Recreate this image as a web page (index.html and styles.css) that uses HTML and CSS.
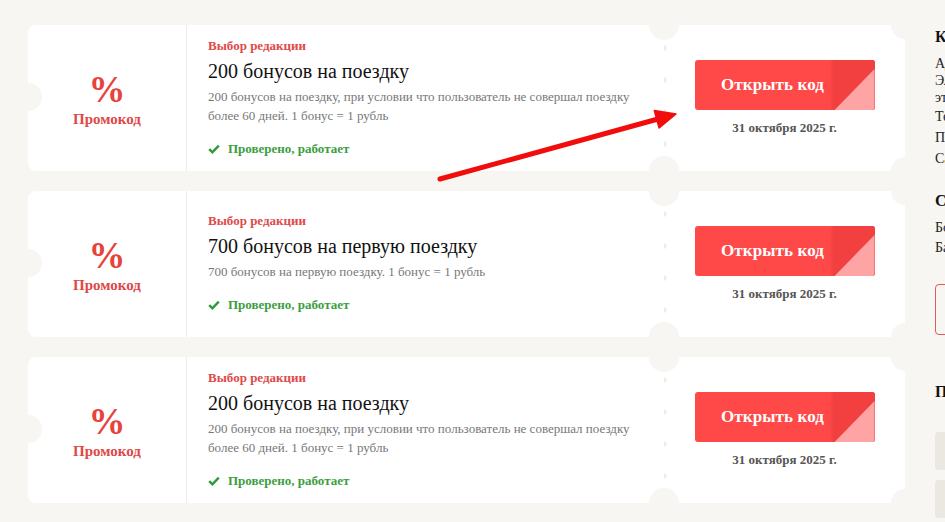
FILE: index.html
```html
<!DOCTYPE html>
<html lang="ru">
<head>
<meta charset="utf-8">
<title>Промокоды</title>
<link rel="stylesheet" href="styles.css">
</head>
<body>
<div class="page">
  <main class="coupons">
    <article class="coupon">
      <div class="coupon-type">
        <span class="percent">%</span>
        <span class="type-name">Промокод</span>
      </div>
      <div class="coupon-info">
        <div class="label">Выбор редакции</div>
        <h2 class="title">200 бонусов на поездку</h2>
        <p class="desc">200 бонусов на поездку, при условии что пользователь не совершал поездку более 60 дней. 1 бонус = 1 рубль</p>
        <div class="verified"><svg class="check" viewBox="0 0 12 10" width="12" height="10"><path d="M1.2 5.2 L4.4 8.3 L10.8 1.6" fill="none" stroke="#2f9a3c" stroke-width="2.4"/></svg>Проверено, работает</div>
      </div>
      <div class="coupon-action">
        <button class="open-btn"><span class="btn-text">Открыть код</span><span class="fold"></span></button>
        <div class="date">31 октября 2025 г.</div>
      </div>
    </article>
    <article class="coupon">
      <div class="coupon-type">
        <span class="percent">%</span>
        <span class="type-name">Промокод</span>
      </div>
      <div class="coupon-info">
        <div class="label">Выбор редакции</div>
        <h2 class="title">700 бонусов на первую поездку</h2>
        <p class="desc">700 бонусов на первую поездку. 1 бонус = 1 рубль</p>
        <div class="verified"><svg class="check" viewBox="0 0 12 10" width="12" height="10"><path d="M1.2 5.2 L4.4 8.3 L10.8 1.6" fill="none" stroke="#2f9a3c" stroke-width="2.4"/></svg>Проверено, работает</div>
      </div>
      <div class="coupon-action">
        <button class="open-btn"><span class="btn-text">Открыть код</span><span class="fold"></span></button>
        <div class="date">31 октября 2025 г.</div>
      </div>
    </article>
    <article class="coupon">
      <div class="coupon-type">
        <span class="percent">%</span>
        <span class="type-name">Промокод</span>
      </div>
      <div class="coupon-info">
        <div class="label">Выбор редакции</div>
        <h2 class="title">200 бонусов на поездку</h2>
        <p class="desc">200 бонусов на поездку, при условии что пользователь не совершал поездку более 60 дней. 1 бонус = 1 рубль</p>
        <div class="verified"><svg class="check" viewBox="0 0 12 10" width="12" height="10"><path d="M1.2 5.2 L4.4 8.3 L10.8 1.6" fill="none" stroke="#2f9a3c" stroke-width="2.4"/></svg>Проверено, работает</div>
      </div>
      <div class="coupon-action">
        <button class="open-btn"><span class="btn-text">Открыть код</span><span class="fold"></span></button>
        <div class="date">31 октября 2025 г.</div>
      </div>
    </article>
    <svg class="arrow" viewBox="0 0 877 200" width="877" height="200">
      <line x1="412" y1="154" x2="630" y2="94" stroke="#f20d0d" stroke-width="5" stroke-linecap="round"/>
      <polygon points="648,89 631.1,103 626.3,85.6" fill="#f20d0d" stroke="#f20d0d" stroke-width="1.5" stroke-linejoin="round"/>
    </svg>
  </main>
  <aside class="sidebar">
    <h3 class="side-title">Контакты</h3>
    <div class="side-block">
      <div class="side-line tight">Адрес: Москва,</div>
      <div class="side-line tight">Электрозаводская ул., 27,</div>
      <div class="side-line tight">этаж 3</div>
      <div class="side-line">Телефон: 8 800 000-00-00</div>
      <div class="side-line">Почта: info@example.ru</div>
      <div class="side-line">Сайт: example.ru</div>
    </div>
    <h3 class="side-title second">Способы оплаты</h3>
    <div class="side-block pay">
      <div class="side-line">Бонусы</div>
      <div class="side-line">Банковская карта</div>
    </div>
    <div class="side-button">Перейти в магазин</div>
    <h3 class="side-title third">Похожие магазины</h3>
    <div class="side-card"></div>
    <div class="side-card"></div>
  </aside>
</div>
</body>
</html>
```
FILE: styles.css
```css
html, body {
  margin: 0;
  padding: 0;
}
body {
  background: #f7f6f2;
  font-family: "Liberation Serif", "Times New Roman", serif;
  color: #111;
  overflow: hidden;
  width: 945px;
  height: 522px;
}
.page {
  display: flex;
  gap: 30px;
  padding: 25px 0 0 28px;
}
.coupons {
  position: relative;
  flex: 0 0 877px;
  display: flex;
  flex-direction: column;
  gap: 20px;
}
.coupon {
  position: relative;
  height: 146px;
  display: grid;
  grid-template-columns: 159px 477px 241px;
  background: #fff;
  border-radius: 8px 0 0 8px;
}
.coupon::before,
.coupon::after {
  content: "";
  position: absolute;
  right: -14px;
  width: 28px;
  height: 28px;
  border-radius: 50%;
  background: #f7f6f2;
}
.coupon::before { top: -14px; }
.coupon::after { bottom: -14px; }

.coupon-type {
  position: relative;
  border-right: 1px solid #ececec;
  display: flex;
  flex-direction: column;
  align-items: center;
  justify-content: center;
  color: #e8423c;
  padding-top: 4px;
}
.coupon-type::before {
  content: "";
  position: absolute;
  left: -14px;
  top: 58px;
  width: 28px;
  height: 28px;
  border-radius: 50%;
  background: #f7f6f2;
}
.percent {
  font-size: 37px;
  font-weight: bold;
  line-height: 36px;
}
.type-name {
  font-size: 15px;
  font-weight: bold;
  line-height: 18px;
  margin-top: 2px;
  color: #e04848;
}

.coupon-info {
  display: flex;
  flex-direction: column;
  justify-content: center;
  padding: 0 20px 2px 21px;
}
.label {
  font-size: 13px;
  font-weight: bold;
  color: #e04a4a;
  line-height: 16px;
}
.title {
  margin: 4px 0 0;
  font-size: 20px;
  font-weight: normal;
  line-height: 26px;
  color: #111;
}
.desc {
  margin: 3px 0 0;
  font-size: 13px;
  line-height: 19px;
  color: #777;
}
.verified {
  margin-top: 16px;
  display: flex;
  align-items: center;
  gap: 8px;
  font-size: 13px;
  font-weight: bold;
  line-height: 16px;
  color: #3b9e3f;
}
.check {
  flex: none;
}

.coupon-action {
  position: relative;
  display: flex;
  flex-direction: column;
  align-items: center;
  justify-content: center;
  background-image: radial-gradient(circle, #eeede9 2.4px, transparent 3px);
  background-size: 6px 32px;
  background-repeat: repeat-y;
  background-position: -3px 7px;
}
.coupon-action::before,
.coupon-action::after {
  content: "";
  position: absolute;
  left: -15px;
  width: 30px;
  height: 30px;
  border-radius: 50%;
  background: #f7f6f2;
}
.coupon-action::before { top: -15px; }
.coupon-action::after { bottom: -15px; }

.open-btn {
  position: relative;
  overflow: hidden;
  width: 180px;
  height: 50px;
  border: none;
  border-radius: 3px;
  background: #ff4848;
  padding: 0 24px 0 0;
  margin-top: 0;
  font-family: inherit;
  color: #fff;
  cursor: pointer;
}
.btn-text {
  position: relative;
  z-index: 1;
  font-size: 17px;
  font-weight: bold;
  line-height: 50px;
  letter-spacing: 0.1px;
}
.fold {
  position: absolute;
  right: 0;
  top: 0;
  width: 42px;
  height: 50px;
  background: #f23f3f;
  box-shadow: -1px 1px 2px rgba(160, 20, 20, 0.15);
}
.fold::after {
  content: "";
  position: absolute;
  inset: 0;
  background: #ffa4a4;
  clip-path: polygon(100% 18%, 100% 100%, 5% 100%);
}
.date {
  margin-top: 10px;
  font-size: 13px;
  font-weight: bold;
  line-height: 16px;
  color: #555;
}

.arrow {
  position: absolute;
  left: 0;
  top: 0;
  pointer-events: none;
}

.sidebar {
  flex: 0 0 260px;
  font-size: 14px;
  line-height: 17px;
  color: #222;
}
.side-title {
  margin: 2px 0 8px;
  font-size: 16px;
  font-weight: bold;
  line-height: 20px;
  color: #111;
}
.side-title.second {
  margin-top: 22px;
  margin-bottom: 7px;
}
.side-title.third {
  margin-top: 47px;
  margin-bottom: 30px;
}
.side-line {
  line-height: 21px;
}
.pay .side-line {
  line-height: 20px;
}
.side-line.tight {
  line-height: 17px;
}
.side-button {
  margin-top: 26px;
  height: 49px;
  border: 1px solid #e05a5a;
  border-radius: 4px;
  color: #e04848;
  display: flex;
  align-items: center;
  padding-left: 16px;
  font-weight: bold;
}
.side-card {
  height: 38px;
  margin-bottom: 10px;
  background: #ebe8e1;
  border-radius: 4px;
}
```
